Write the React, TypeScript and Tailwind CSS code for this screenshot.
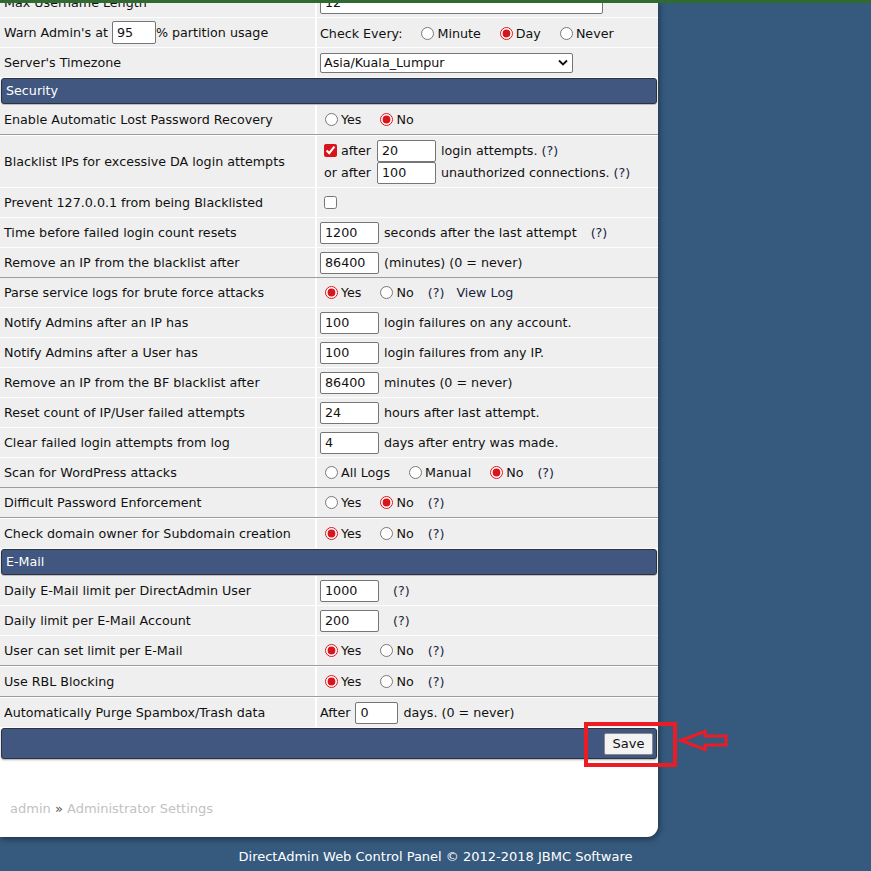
import React from "react";

const FONT = "font-['DejaVu_Sans','Verdana',sans-serif]";

function Radio({ name, checked, label }: { name: string; checked?: boolean; label: string }) {
  return (
    <label className="flex items-center mr-[14px]">
      <input
        type="radio"
        name={name}
        defaultChecked={checked}
        className="ml-[5px] mr-[3px] w-[13px] h-[13px] accent-[#d8141c]"
      />
      <span>{label}</span>
    </label>
  );
}

function Input({ value, w = "w-[59px]" }: { value: string; w?: string }) {
  return (
    <input
      type="text"
      defaultValue={value}
      className={`${w} h-[22px] bg-white border border-[#767676] rounded-[2px] px-[4px] text-[12.7px] text-[#111] outline-none`}
    />
  );
}

function Help({ className = "" }: { className?: string }) {
  return <span className={`text-[#1a2440] ${className}`}>(?)</span>;
}

function Row({
  label,
  children,
  dark,
  gap = true,
  h = "h-[29px]",
}: {
  label: React.ReactNode;
  children?: React.ReactNode;
  dark?: boolean;
  gap?: boolean;
  h?: string;
}) {
  return (
    <div className={dark && gap ? "border-b border-white" : ""}>
      <div className={`flex border-b ${dark ? "border-[#9c9c9c]" : "border-white"}`}>
        <div className={`w-[315px] ${h} bg-[#efefef] flex items-center pl-[4px] shrink-0`}>{label}</div>
        <div className="w-[2px] bg-white shrink-0" />
        <div className={`flex-1 ${h} bg-[#efefef] flex items-center pl-[3px]`}>{children}</div>
      </div>
    </div>
  );
}

function Header({ title, children, h = "h-[26px]" }: { title?: string; children?: React.ReactNode; h?: string }) {
  return (
    <div
      className={`${h} mx-[1px] mb-[1px] bg-[#41577f] border border-[#2c3340] rounded-[3px] shadow-[0_1px_2px_rgba(0,0,0,0.35)] flex items-center justify-between pl-[4px] pr-[3px] text-white`}
    >
      <span>{title}</span>
      {children}
    </div>
  );
}

export default function App() {
  return (
    <div className={`${FONT} text-[12.7px] text-[#111] bg-[#355a7e] min-h-[871px] relative`}>
      <div className="h-[3px] bg-[#2f6a31] w-full absolute top-0 left-0 z-10" />
      <div className="w-[658px] bg-white rounded-br-[11px] shadow-[1px_2px_6px_rgba(0,0,0,0.45)] pb-[18px]">
        {/* partially visible top row */}
        <div className="h-[18px] overflow-hidden">
          <div className="-mt-[12px]">
            <Row label="Max Username Length">
              <Input value="12" w="w-[283px]" />
            </Row>
          </div>
        </div>
        <Row
          label={
            <span className="flex items-center">
              Warn Admin's at&nbsp;
              <input
                type="text"
                defaultValue="95"
                className="w-[44px] h-[23px] bg-white border border-[#767676] rounded-[2px] px-[4px] text-[12.7px] outline-none"
              />
              % partition usage
            </span>
          }
        >
          <div className="flex items-center pt-[3px]">
            <span className="mr-[14px]">Check Every:</span>
            <Radio name="ce" label="Minute" />
            <Radio name="ce" label="Day" checked />
            <Radio name="ce" label="Never" />
          </div>
        </Row>
        <Row label="Server's Timezone">
          <div className="w-[253px] h-[20px] bg-white border border-[#767676] rounded-[2px] flex items-center justify-between pl-[3px] pr-[4px]">
            <span>Asia/Kuala_Lumpur</span>
            <svg width="10" height="7" viewBox="0 0 10 7">
              <path d="M1 1.5 L5 5.5 L9 1.5" fill="none" stroke="#111" strokeWidth="1.8" />
            </svg>
          </div>
        </Row>
        <Header title="Security" />
        <Row label="Enable Automatic Lost Password Recovery" dark>
          <Radio name="ealpr" label="Yes" />
          <Radio name="ealpr" label="No" checked />
        </Row>
        <Row label="Blacklist IPs for excessive DA login attempts" h="h-[51px]">
          <div className="flex flex-col">
            <div className="flex items-center">
              <span className="w-[57px] flex items-center">
                <input type="checkbox" defaultChecked className="ml-[4px] mr-[4px] w-[13px] h-[13px] accent-[#d8141c]" />
                after
              </span>
              <Input value="20" />
              <span className="ml-[5px]">login attempts. <Help /></span>
            </div>
            <div className="flex items-center">
              <span className="w-[57px] pl-[4px]">or after</span>
              <Input value="100" />
              <span className="ml-[5px]">unauthorized connections. <Help /></span>
            </div>
          </div>
        </Row>
        <Row label="Prevent 127.0.0.1 from being Blacklisted">
          <input type="checkbox" className="ml-[4px] w-[13px] h-[13px] accent-[#d8141c]" />
        </Row>
        <Row label="Time before failed login count resets">
          <Input value="1200" />
          <span className="ml-[5px]">seconds after the last attempt</span>
          <Help className="ml-[14px]" />
        </Row>
        <Row label="Remove an IP from the blacklist after" dark gap={false}>
          <Input value="86400" />
          <span className="ml-[5px]">(minutes) (0 = never)</span>
        </Row>
        <Row label="Parse service logs for brute force attacks">
          <Radio name="psl" label="Yes" checked />
          <Radio name="psl" label="No" />
          <Help />
          <span className="ml-[12px] text-[#1a2440]">View Log</span>
        </Row>
        <Row label="Notify Admins after an IP has">
          <Input value="100" />
          <span className="ml-[5px]">login failures on any account.</span>
        </Row>
        <Row label="Notify Admins after a User has">
          <Input value="100" />
          <span className="ml-[5px]">login failures from any IP.</span>
        </Row>
        <Row label="Remove an IP from the BF blacklist after">
          <Input value="86400" />
          <span className="ml-[5px]">minutes (0 = never)</span>
        </Row>
        <Row label="Reset count of IP/User failed attempts">
          <Input value="24" />
          <span className="ml-[5px]">hours after last attempt.</span>
        </Row>
        <Row label="Clear failed login attempts from log">
          <Input value="4" />
          <span className="ml-[5px]">days after entry was made.</span>
        </Row>
        <Row label="Scan for WordPress attacks" dark gap={false}>
          <Radio name="wp" label="All Logs" />
          <Radio name="wp" label="Manual" />
          <Radio name="wp" label="No" checked />
          <Help />
        </Row>
        <Row label="Difficult Password Enforcement" dark>
          <Radio name="dpe" label="Yes" />
          <Radio name="dpe" label="No" checked />
          <Help />
        </Row>
        <Row label="Check domain owner for Subdomain creation">
          <Radio name="cdo" label="Yes" checked />
          <Radio name="cdo" label="No" />
          <Help />
        </Row>
        <Header title="E-Mail" />
        <Row label="Daily E-Mail limit per DirectAdmin User">
          <Input value="1000" />
          <Help className="ml-[14px]" />
        </Row>
        <Row label="Daily limit per E-Mail Account">
          <Input value="200" />
          <Help className="ml-[14px]" />
        </Row>
        <Row label="User can set limit per E-Mail" dark>
          <Radio name="ucs" label="Yes" checked />
          <Radio name="ucs" label="No" />
          <Help />
        </Row>
        <Row label="Use RBL Blocking" dark>
          <Radio name="rbl" label="Yes" checked />
          <Radio name="rbl" label="No" />
          <Help />
        </Row>
        <Row label="Automatically Purge Spambox/Trash data">
          <span className="mr-[5px]">After</span>
          <Input value="0" w="w-[43px]" />
          <span className="ml-[5px]">days. (0 = never)</span>
        </Row>
        <div className="relative">
          <Header h="h-[31px]">
            <span />
            <button className="h-[22px] w-[49px] bg-[#f3f3f3] border border-[#8a8a8a] rounded-[2px] text-[#111] text-[13px]">
              Save
            </button>
          </Header>
          {/* annotation overlay */}
          <div className="absolute left-[584px] top-[-6px] w-[93px] h-[45px] border-[4px] border-[#ec1c24]" />
          <svg className="absolute left-[678px] top-[0px]" width="52" height="26" viewBox="0 0 52 26">
            <polygon
              points="3,12.5 27,3.5 27,8 48,8 48,17 27,17 27,21.5"
              fill="none"
              stroke="#ec1c24"
              strokeWidth="3"
              strokeLinejoin="miter"
            />
          </svg>
        </div>
        <div className="mt-[40px] pl-[10px] text-[13px] text-[#c2c2c2]">
          admin <span className="text-[#555]">»</span> Administrator Settings
        </div>
      </div>
      <div className="text-center text-white text-[13px] pt-[10px]">
        DirectAdmin Web Control Panel © 2012-2018 JBMC Software
      </div>
    </div>
  );
}
